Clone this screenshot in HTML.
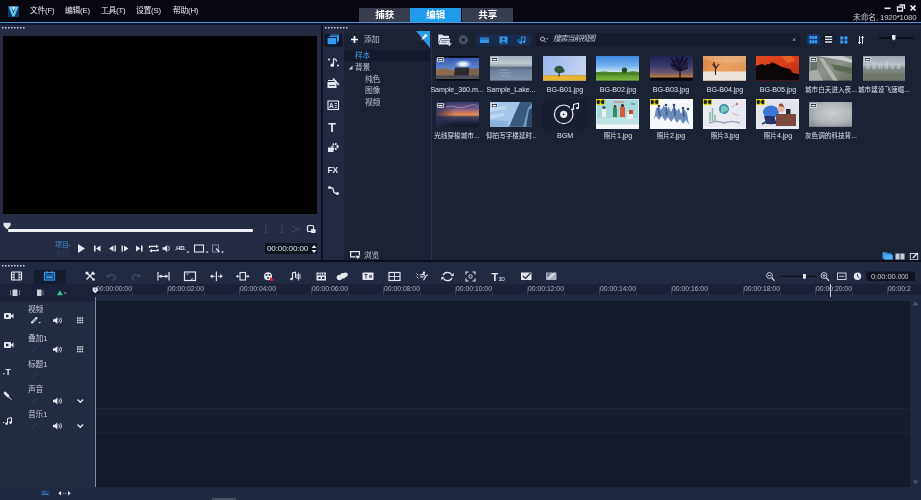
<!DOCTYPE html>
<html lang="zh"><head><meta charset="utf-8"><title>VideoStudio</title><style>
*{box-sizing:border-box;margin:0;padding:0}
html,body{width:921px;height:500px;overflow:hidden;background:#252b42}
body{position:relative;font-family:"Liberation Sans","Noto Sans CJK SC",sans-serif;color:#d5d9e3;font-size:8px;line-height:1}
.a{position:absolute}
.t,.tab,svg{will-change:transform}
.t{position:absolute;white-space:nowrap}
svg{position:absolute;overflow:visible}
#title{left:0;top:0;width:921px;height:22px;background:linear-gradient(#08070f 0,#08070f 18px,#040818 22px)}
#bline{left:0;top:21.8px;width:921px;height:1.3px;background:#5596cc}
.menu{top:6.5px;font-size:7.8px;color:#e6e8ee;letter-spacing:-0.25px}
.tab{top:8px;height:13.8px;background:#373d4f;color:#fff;font-size:9.5px;font-weight:bold;text-align:center;line-height:14px}
.tab.on{background:#1f9bea}
#prev{left:2.8px;top:36px;width:314.5px;height:177.5px;background:#000}
.lbl{font-size:7.15px;color:#dde0e9;text-align:center;width:60px;letter-spacing:-0.05px;overflow:hidden;height:10px;line-height:10px}
.lbl i{font-style:normal;font-size:6.6px;letter-spacing:0}
.th{position:absolute;overflow:hidden}
.tree{font-size:7.8px;color:#bcc1cf;letter-spacing:-0.2px}
.rl{font-size:6.8px;color:#aab1c3;top:286.3px;letter-spacing:0}
.tk{width:1px;background:#39435c;top:290px;height:7px}
.trk{font-size:7.8px;color:#c2c7d4;letter-spacing:-0.2px}
</style></head><body>
<div class="a" id="title"></div><div class="a" id="bline"></div>
<svg style="left:8px;top:5.5px" width="11" height="11" viewBox="0 0 11 11"><rect x="0" y="0" width="11" height="11" fill="#0d3a66"/><path d="M0.5 0.5 L3.2 0.5 L5.5 7 L7.8 0.5 L10.5 0.5 L6.6 10.5 L4.4 10.5 Z" fill="#5fc4ee"/><path d="M3.2 0.5h4.6L5.5 5z" fill="#bfe6fa"/></svg>
<div class="t menu" style="left:29.5px">文件(F)</div>
<div class="t menu" style="left:65px">编辑(E)</div>
<div class="t menu" style="left:100.5px">工具(T)</div>
<div class="t menu" style="left:136px">设置(S)</div>
<div class="t menu" style="left:172.5px">帮助(H)</div>
<div class="a tab" style="left:359px;width:51.3px">捕获</div>
<div class="a tab on" style="left:410.3px;width:51.4px">编辑</div>
<div class="a tab" style="left:461.7px;width:51.4px">共享</div>
<svg style="left:883px;top:3px" width="36" height="10" viewBox="0 0 36 10"><rect x="1.5" y="4.5" width="6" height="1.6" fill="#e8eaf0"/><path d="M14.5 4h5v4h-5z M16.5 2h5v4" fill="none" stroke="#e8eaf0" stroke-width="1.3"/><path d="M27.5 2.5l5 5m0-5l-5 5" stroke="#fff" stroke-width="1.6"/></svg>
<div class="t" style="right:4.5px;top:13.9px;font-size:7.8px;color:#c9ccd6;letter-spacing:-0.15px">未命名, 1920*1080</div>
<div class="a" style="left:0;top:23px;width:319px;height:237px;background:#252b42"></div>
<div class="a" id="prev"></div>
<svg style="left:2px;top:26.7px" width="24" height="2"><rect x="0" y="0" width="1.5" height="1.5" fill="#cfd3e0"/><rect x="3" y="0" width="1.5" height="1.5" fill="#cfd3e0"/><rect x="6" y="0" width="1.5" height="1.5" fill="#cfd3e0"/><rect x="9" y="0" width="1.5" height="1.5" fill="#cfd3e0"/><rect x="12" y="0" width="1.5" height="1.5" fill="#cfd3e0"/><rect x="15" y="0" width="1.5" height="1.5" fill="#cfd3e0"/><rect x="18" y="0" width="1.5" height="1.5" fill="#cfd3e0"/><rect x="21" y="0" width="1.5" height="1.5" fill="#cfd3e0"/></svg>
<div class="a" style="left:8px;top:229px;width:245px;height:3px;background:#eef0f6;border-radius:1px"></div>
<svg style="left:3px;top:221.5px" width="8" height="8" viewBox="0 0 8 8"><path d="M0.5 0.8h7v3L4 7.5 0.5 3.8z" fill="#dfe2ea"/></svg>
<div class="t" style="left:54.5px;top:241.2px;font-size:7px;color:#3f93d8;letter-spacing:-0.3px">项目-</div>
<div class="t" style="left:54.5px;top:249.7px;font-size:7px;color:#2d3a58;letter-spacing:-0.3px">素材-</div>
<svg style="left:0;top:0" width="921" height="500"><path d="M78 244l7 4.5-7 4.5z" fill="#e4e7ee"/><path d="M94 245.5h1.6v6H94z M100.5 245.5v6l-4.5-3z" fill="#e4e7ee"/><path d="M113.5 245.5v6l-4.5-3z M114.5 245.5h1.4v6h-1.4z" fill="#e4e7ee"/><path d="M121.5 245.5h1.4v6h-1.4z M124 245.5l4.5 3-4.5 3z" fill="#e4e7ee"/><path d="M136 245.5l4.5 3-4.5 3z M141 245.5h1.6v6H141z" fill="#e4e7ee"/><path d="M149.5 248v-1.6h7.5 M158 249v1.7h-7.5" fill="none" stroke="#e4e7ee" stroke-width="1.3"/><path d="M156 244.6l2.6 1.8-2.6 1.8z M152 248.9l-2.6 1.8 2.6 1.8z" fill="#e4e7ee"/><path d="M162.5 247.3h2l2.7-2.3v7l-2.7-2.3h-2z" fill="#e4e7ee"/><path d="M168.6 246.3q1.5 2.2 0 4.4" fill="none" stroke="#e4e7ee" stroke-width="0.9"/><text x="175" y="250" font-size="6" font-weight="bold" fill="#e4e7ee" font-family="Liberation Sans,sans-serif" letter-spacing="-0.4">.HD.</text><path d="M186.5 251.5h3l-1.5 1.8z" fill="#e4e7ee"/><rect x="194.5" y="245" width="9" height="7" fill="none" stroke="#e4e7ee" stroke-width="1.1"/><path d="M205.5 251.5h3l-1.5 1.8z" fill="#e4e7ee"/><rect x="212.5" y="245" width="6" height="7" fill="none" stroke="#7d869c" stroke-width="1"/><path d="M216 248.5l3.5 3.5" stroke="#e4e7ee" stroke-width="1.2"/><path d="M221 251.5h3l-1.5 1.8z" fill="#e4e7ee"/><path d="M267.5 225.5h-1.8v7h1.8 M280.5 225.5h1.8v7h-1.8" fill="none" stroke="#3a4560" stroke-width="1.1"/><path d="M292 226l8 4.5m-8 1.5l8-4" stroke="#3a4560" stroke-width="1.2" fill="none"/><rect x="307.5" y="225.5" width="6" height="6" rx="1" fill="none" stroke="#e4e7ee" stroke-width="1.2"/><rect x="311" y="229" width="4.6" height="4" rx="0.8" fill="#e4e7ee"/></svg>
<div class="a" style="left:265px;top:243px;width:52px;height:11px;background:#10141f"></div>
<div class="t" style="left:267px;top:244.7px;font-size:8.1px;color:#dfe2ea;letter-spacing:-0.15px">00:00:00:00</div>
<svg style="left:311px;top:244px" width="6" height="10" viewBox="0 0 6 10"><path d="M0.5 4l2.5-3 2.5 3z M0.5 6l2.5 3 2.5-3z" fill="#e4e7ee"/></svg>
<div class="a" style="left:321px;top:23px;width:2.2px;height:237px;background:#0d1122"></div>
<div class="a" style="left:323.2px;top:23px;width:20.8px;height:237px;background:#222a42"></div>
<div class="a" style="left:344px;top:23px;width:87px;height:237px;background:#1b2233"></div>
<div class="a" style="left:431px;top:23px;width:490px;height:237px;background:#1b2233"></div>
<div class="a" style="left:430.5px;top:28px;width:1px;height:232px;background:#293048"></div>
<div class="a" style="left:344px;top:23px;width:577px;height:11px;background:linear-gradient(#262c40,#1b2233)"></div>
<div class="a" style="left:0;top:23px;width:921px;height:1.7px;background:linear-gradient(#04112c,#0c1830)"></div>
<svg style="left:325px;top:26.7px" width="24" height="2"><rect x="0" y="0" width="1.5" height="1.5" fill="#cfd3e0"/><rect x="3" y="0" width="1.5" height="1.5" fill="#cfd3e0"/><rect x="6" y="0" width="1.5" height="1.5" fill="#cfd3e0"/><rect x="9" y="0" width="1.5" height="1.5" fill="#cfd3e0"/><rect x="12" y="0" width="1.5" height="1.5" fill="#cfd3e0"/><rect x="15" y="0" width="1.5" height="1.5" fill="#cfd3e0"/><rect x="18" y="0" width="1.5" height="1.5" fill="#cfd3e0"/><rect x="21" y="0" width="1.5" height="1.5" fill="#cfd3e0"/></svg>
<div class="a" style="left:344px;top:50px;width:86px;height:11px;background:#141a2b"></div>
<svg style="left:350px;top:34.5px" width="9" height="9" viewBox="0 0 9 9"><path d="M4.5 1v7M1 4.5h7" stroke="#fff" stroke-width="1.7"/></svg>
<div class="t tree" style="left:364px;top:35.8px;">添加</div>
<div class="t tree" style="left:355px;top:51.5px;color:#3f9be0">样本</div>
<svg style="left:348px;top:65px" width="5" height="5" viewBox="0 0 5 5"><path d="M4.5 0.5v4h-4z" fill="#c9cdd8"/></svg>
<div class="t tree" style="left:355px;top:63.5px">背景</div>
<div class="t tree" style="left:364.5px;top:75.8px">纯色</div>
<div class="t tree" style="left:364.5px;top:87.4px">图像</div>
<div class="t tree" style="left:364.5px;top:98.5px">视频</div>
<svg style="left:416px;top:31px" width="14" height="17" viewBox="0 0 14 17"><path d="M0 0h14v17z" fill="#2b9ae6"/><path d="M9.5 3l2 2-2.5 1.2-1.6 2-1.4-1.4 2-1.6z M6.6 7.6l-1.6 1.8" fill="#fff" stroke="#fff" stroke-width="0.6"/></svg>
<svg style="left:350px;top:251.3px" width="11" height="9" viewBox="0 0 11 9"><path d="M0.6 0.6h8.8v5.2h-8.8z" fill="none" stroke="#e4e7ee" stroke-width="1.2"/><path d="M4.8 4.6h6l-3 3.8z" fill="#e4e7ee" stroke="#1b2233" stroke-width="0.6"/></svg>
<div class="t tree" style="left:364px;top:252.3px;font-size:7.6px">浏览</div>
<svg style="left:0;top:0" width="921" height="500"><rect x="324.4" y="33.8" width="18" height="12.8" fill="#10172c"/><path d="M327.6 38h8.6v6.2h-8.6z" fill="#2f9cf0"/><path d="M329 36.5h8.5v6 M330.5 35h8v6" fill="none" stroke="#2f9cf0" stroke-width="1.1"/><path d="M333.5 58.5v6.5" stroke="#e4e7ee" stroke-width="1.2"/><circle cx="332.2" cy="65.2" r="1.8" fill="#e4e7ee"/><path d="M333.5 58.5q3 .5 3 3" stroke="#e4e7ee" fill="none" stroke-width="1.2"/><circle cx="329" cy="59.5" r="1" fill="#e4e7ee"/><circle cx="338" cy="65.5" r="1" fill="#e4e7ee"/><rect x="327.5" y="82" width="9" height="6" fill="#e4e7ee"/><path d="M328 80.5h8" stroke="#e4e7ee" stroke-width="1"/><path d="M333 78.5l6 6.5" stroke="#e4e7ee" stroke-width="1.6"/><path d="M329 85.5h6" stroke="#1f2942" stroke-width="0.8"/><rect x="328" y="101" width="10.5" height="8.5" fill="none" stroke="#e4e7ee" stroke-width="1.1"/><text x="329" y="108.3" font-size="6.5" font-weight="bold" fill="#e4e7ee" font-family="Liberation Sans,sans-serif">A</text><path d="M334.5 103.5h2.5m-2.5 2h2.5m-2.5 2h2.5" stroke="#e4e7ee" stroke-width="0.8"/><text x="328.2" y="131.5" font-size="12.5" font-weight="bold" fill="#e4e7ee" font-family="Liberation Sans,sans-serif">T</text><circle cx="335" cy="146.5" r="2.6" fill="none" stroke="#e4e7ee" stroke-width="2" stroke-dasharray="1.5 0.9"/><rect x="328" y="147.5" width="5.5" height="4.5" fill="#e4e7ee"/><text x="327.5" y="173" font-size="8.5" font-weight="bold" fill="#e4e7ee" font-family="Liberation Sans,sans-serif" letter-spacing="-0.3">FX</text><path d="M329.5 187.5q4 0 4 3t4 3" fill="none" stroke="#e4e7ee" stroke-width="1.3"/><circle cx="329.5" cy="187.5" r="1.5" fill="#e4e7ee"/><circle cx="337.5" cy="193.5" r="1.5" fill="#e4e7ee"/></svg>
<svg style="left:0;top:0" width="921" height="500"><path d="M438.3 34.5h4l1 1.3h5.7v2.2h-8.2l-2.5 6z" fill="#e4e7ee"/><path d="M441 38.8h9.5l-2.5 5.7h-9.5z" fill="#e4e7ee"/><path d="M441.5 40.5h7.5m-8 1.7h6" stroke="#1b2233" stroke-width="0.5"/><path d="M449.3 41.5v4.5m-2.2-2.2h4.4" stroke="#e4e7ee" stroke-width="1.3"/><circle cx="463.3" cy="39.8" r="3.1" fill="none" stroke="#4a5266" stroke-width="2.4"/><circle cx="463.3" cy="39.8" r="4.3" fill="none" stroke="#4a5266" stroke-width="1.2" stroke-dasharray="1.7 1.68"/><rect x="476" y="34.5" width="55.5" height="11.5" rx="2" fill="#1b2b4d"/><rect x="480" y="37.5" width="9" height="5.5" fill="#2f96ea"/><path d="M480 39h9" stroke="#1b2b4d" stroke-width="0.6"/><rect x="499.5" y="36.5" width="8" height="7" fill="#2f96ea"/><circle cx="503.5" cy="39" r="1.2" fill="#1b2b4d"/><path d="M501 43q2.5-3 5 0z" fill="#1b2b4d"/><path d="M521.5 37v5.5 M521.5 37h3.5v4.5" stroke="#2f96ea" stroke-width="1.2" fill="none"/><circle cx="520.5" cy="42.7" r="1.4" fill="#2f96ea"/><circle cx="524" cy="41.8" r="1.4" fill="#2f96ea"/><path d="M517 40h3m-3 1.8h2" stroke="#2f96ea" stroke-width="0.8"/><rect x="536" y="33" width="264" height="13" rx="1" fill="#161b2d"/><circle cx="542.5" cy="39" r="2" fill="none" stroke="#b9bfce" stroke-width="1"/><path d="M544 40.5l2 2" stroke="#b9bfce" stroke-width="1"/><path d="M546 38.2h2.4l-1.2 1.5z" fill="#b9bfce"/><path d="M793 38.5l2.4 2.4m0-2.4l-2.4 2.4" stroke="#b9bfce" stroke-width="0.8"/><rect x="807.2" y="34.3" width="12.3" height="10" fill="#19387a"/><path d="M809.5 36h7.5v3h-7.5z M809.5 40.2h7.5v3h-7.5z" fill="#37a0f2"/><path d="M812 36v7.2m2.5-7.2v7.2" stroke="#193462" stroke-width="0.5"/><rect x="823.5" y="34.3" width="10" height="10" fill="#11172b"/><path d="M825 36.8h7.2m-7.2 2.6h7.2m-7.2 2.6h7.2" stroke="#e4e7ee" stroke-width="1.4"/><rect x="838.3" y="34.3" width="10.8" height="10" fill="#162243"/><path d="M840.2 36.5h3v3h-3z m4.2 0h3v3h-3z m-4.2 4h3v3h-3z m4.2 0h3v3h-3z" fill="#37a0f2"/><path d="M859.5 36v8m3-8v8" stroke="#e4e7ee" stroke-width="1"/><path d="M857.8 42l1.7 2.2 1.7-2.2z M860.8 38l1.7-2.2 1.7 2.2z" fill="#e4e7ee"/><path d="M879 37.8h34.5" stroke="#090c15" stroke-width="1.8"/><path d="M892 35h3.5v4l-1.75 1.5-1.75-1.5z" fill="#e4e7ee"/></svg>
<div class="t" style="left:553px;top:35.3px;font-size:7.8px;font-style:italic;color:#c5cad6;letter-spacing:-0.9px">搜索当前视图</div>
<div class="th" style="left:436px;top:56px;width:42.9px;height:24.6px;"><svg style="left:0;top:0" width="43.2" height="24.6" viewBox="0 0 43.2 24.6" preserveAspectRatio="none"><defs><linearGradient id="g1" x1="0" y1="0" x2="0" y2="1"><stop offset="0" stop-color="#3458b0"/><stop offset="0.55" stop-color="#6488cc"/><stop offset="0.6" stop-color="#8a7560"/><stop offset="1" stop-color="#6a5848"/></linearGradient><radialGradient id="g1s" cx="0.63" cy="0.3" r="0.22"><stop offset="0" stop-color="#fff"/><stop offset="0.4" stop-color="#dfeaff" stop-opacity="0.9"/><stop offset="1" stop-color="#7aa0e0" stop-opacity="0"/></radialGradient></defs><rect width="43.2" height="24.6" fill="#05060a"/><rect y="1.8" width="43.2" height="21" fill="url(#g1)"/><rect y="1.8" width="43.2" height="21" fill="url(#g1s)"/><path d="M0 14q6-3 12-1l6 3v6.8H0z" fill="#8c6a4e"/><path d="M19 11.5h14l2 4v5H18z" fill="#2c2a2c"/><path d="M33 13l10-1v10.8H33z" fill="#7a6450"/><rect y="19.5" width="43.2" height="3.3" fill="#4a4e58"/></svg></div>
<svg style="left:437px;top:57px" width="7" height="5" viewBox="0 0 7 5"><rect x="0.4" y="0.4" width="6.2" height="4.2" rx="0.6" fill="#222a3c" stroke="#fff" stroke-width="0.8"/><rect x="1.6" y="1.9" width="3.8" height="1.4" fill="#fff"/></svg>
<div class="th" style="left:489.6px;top:56px;width:42.9px;height:24.6px;"><svg style="left:0;top:0" width="43.2" height="24.6" viewBox="0 0 43.2 24.6" preserveAspectRatio="none"><defs><linearGradient id="g2" x1="0" y1="0" x2="0" y2="1"><stop offset="0" stop-color="#a2b0be"/><stop offset="0.3" stop-color="#c2cad0"/><stop offset="0.42" stop-color="#94a0ac"/><stop offset="0.46" stop-color="#586a80"/><stop offset="0.6" stop-color="#6e829c"/><stop offset="1" stop-color="#8294ac"/></linearGradient></defs><rect width="43.2" height="24.6" fill="url(#g2)"/><path d="M10 14h8M9 17h12M11 20h9" stroke="#aebccc" stroke-width="0.8" opacity="0.7"/></svg></div>
<svg style="left:490.6px;top:57px" width="7" height="5" viewBox="0 0 7 5"><rect x="0.4" y="0.4" width="6.2" height="4.2" rx="0.6" fill="#222a3c" stroke="#fff" stroke-width="0.8"/><rect x="1.6" y="1.9" width="3.8" height="1.4" fill="#fff"/></svg>
<div class="th" style="left:543px;top:56px;width:42.9px;height:24.6px;"><svg style="left:0;top:0" width="43.2" height="24.6" viewBox="0 0 43.2 24.6" preserveAspectRatio="none"><defs><linearGradient id="g3" x1="0" y1="0" x2="1" y2="0.3"><stop offset="0" stop-color="#98b4ea"/><stop offset="1" stop-color="#c6d2f2"/></linearGradient></defs><rect width="43.2" height="24.6" fill="url(#g3)"/><rect y="19.6" width="43.2" height="5" fill="#e6b830"/><rect y="19.2" width="43.2" height="0.9" fill="#c9a040"/><ellipse cx="16" cy="13.5" rx="4.6" ry="3.8" fill="#2e5a3c"/><ellipse cx="19" cy="14.8" rx="2.6" ry="2" fill="#2e5a3c"/><path d="M15.5 16h1.3v4.5h-1.3z" fill="#3a4030"/></svg></div>
<div class="th" style="left:596.4px;top:56px;width:42.9px;height:24.6px;"><svg style="left:0;top:0" width="43.2" height="24.6" viewBox="0 0 43.2 24.6" preserveAspectRatio="none"><defs><linearGradient id="g4" x1="0" y1="0" x2="0" y2="1"><stop offset="0" stop-color="#3f86de"/><stop offset="0.4" stop-color="#74b2ee"/><stop offset="0.66" stop-color="#cde6f8"/><stop offset="0.67" stop-color="#4c8a2a"/><stop offset="1" stop-color="#7cba40"/></linearGradient></defs><rect width="43.2" height="24.6" fill="url(#g4)"/><path d="M0 16.5q8-2 16 0t14 0 13.2-.5v3H0z" fill="#4a8428"/><circle cx="28.5" cy="14.3" r="2.7" fill="#234e22"/></svg></div>
<div class="th" style="left:649.8px;top:56px;width:42.9px;height:24.6px;"><svg style="left:0;top:0" width="43.2" height="24.6" viewBox="0 0 43.2 24.6" preserveAspectRatio="none"><defs><linearGradient id="g5" x1="0" y1="0" x2="0" y2="1"><stop offset="0" stop-color="#23285c"/><stop offset="0.4" stop-color="#45457f"/><stop offset="0.7" stop-color="#8c6c7c"/><stop offset="0.86" stop-color="#e09a48"/><stop offset="0.89" stop-color="#0a0808"/><stop offset="1" stop-color="#050404"/></linearGradient></defs><rect width="43.2" height="24.6" fill="url(#g5)"/><path d="M30 22v-11m0 4l-6-7m6 5l6-8m-6 6l-9-2m9 5l8-2m-8-3l-4-8m4 7l3-8m-9 6l-3-4m14 3l3-3" stroke="#100c18" stroke-width="1.2" fill="none"/><ellipse cx="29.5" cy="9" rx="9" ry="6.5" fill="#141026" opacity="0.55"/><rect x="0" y="0" width="43.2" height="24.6" fill="#0a0a20" opacity="0.18"/></svg></div>
<div class="th" style="left:703px;top:56px;width:42.9px;height:24.6px;"><svg style="left:0;top:0" width="43.2" height="24.6" viewBox="0 0 43.2 24.6" preserveAspectRatio="none"><defs><linearGradient id="g6" x1="0" y1="0" x2="1" y2="0.4"><stop offset="0" stop-color="#d88040"/><stop offset="0.5" stop-color="#eaa060"/><stop offset="1" stop-color="#e09858"/></linearGradient></defs><rect width="43.2" height="24.6" fill="url(#g6)"/><path d="M0 3q20 6 43.2 3v-6H0z" fill="#e8b080" opacity="0.6"/><rect y="15.5" width="43.2" height="9.1" fill="#ebe4dc"/><path d="M12.5 19v-9m0 2l-3-4m3 5l3.5-5m-3.5 3l-2-5" stroke="#3a2418" stroke-width="1.1" fill="none"/></svg></div>
<div class="th" style="left:756.2px;top:56px;width:42.9px;height:24.6px;"><svg style="left:0;top:0" width="43.2" height="24.6" viewBox="0 0 43.2 24.6" preserveAspectRatio="none"><defs><linearGradient id="g7" x1="0" y1="0" x2="1" y2="1"><stop offset="0" stop-color="#e04a20"/><stop offset="0.5" stop-color="#d83c1c"/><stop offset="1" stop-color="#b82814"/></linearGradient></defs><rect width="43.2" height="24.6" fill="url(#g7)"/><path d="M26 0h10l3 5-8 2z" fill="#f07030" opacity="0.7"/><path d="M0 10l6-2 5 2 5-4 6 3 4 2 8 2 3 4 6 1v6.6H0z" fill="#0c0606"/><path d="M10 9l14 3 10 5" stroke="#0c0606" stroke-width="2.2" fill="none"/></svg></div>
<div class="th" style="left:809.4px;top:56px;width:42.9px;height:24.6px;"><svg style="left:0;top:0" width="43.2" height="24.6" viewBox="0 0 43.2 24.6" preserveAspectRatio="none"><defs><linearGradient id="g8" x1="0" y1="0" x2="1" y2="1"><stop offset="0" stop-color="#767c78"/><stop offset="0.5" stop-color="#8c928a"/><stop offset="1" stop-color="#687062"/></linearGradient></defs><rect width="43.2" height="24.6" fill="url(#g8)"/><path d="M8 0h26l9.2 4v3l-12-3z" fill="#c8ccd0"/><path d="M10 2l14 22.6h5L14 2z" fill="#b4b4ac"/><path d="M22 8l21.2 4v6L26 14z" fill="#5c6a54"/><path d="M0 16l8-3 6 11.6H0z" fill="#a8aca8"/><path d="M2 6h6v8H2z" fill="#6a706c"/></svg></div>
<svg style="left:810.4px;top:57px" width="7" height="5" viewBox="0 0 7 5"><rect x="0.4" y="0.4" width="6.2" height="4.2" rx="0.6" fill="#222a3c" stroke="#fff" stroke-width="0.8"/><rect x="1.6" y="1.9" width="3.8" height="1.4" fill="#fff"/></svg>
<div class="th" style="left:862.6px;top:56px;width:42.9px;height:24.6px;"><svg style="left:0;top:0" width="43.2" height="24.6" viewBox="0 0 43.2 24.6" preserveAspectRatio="none"><defs><linearGradient id="g9" x1="0" y1="0" x2="0" y2="1"><stop offset="0" stop-color="#9aa4b0"/><stop offset="0.35" stop-color="#b8c0c8"/><stop offset="0.5" stop-color="#848c8c"/><stop offset="1" stop-color="#687060"/></linearGradient></defs><rect width="43.2" height="24.6" fill="url(#g9)"/><path d="M4 13v-4h2v4m4 0v-6h2v6m4 0v-5h2.5v5m4 0v-7h2v7m4 0v-5h2v5m4 0v-4h2v4" stroke="#c4ccd0" stroke-width="1.4" fill="none" opacity="0.8"/><rect y="17" width="43.2" height="7.6" fill="#70786a" opacity="0.8"/></svg></div>
<svg style="left:863.6px;top:57px" width="7" height="5" viewBox="0 0 7 5"><rect x="0.4" y="0.4" width="6.2" height="4.2" rx="0.6" fill="#222a3c" stroke="#fff" stroke-width="0.8"/><rect x="1.6" y="1.9" width="3.8" height="1.4" fill="#fff"/></svg>
<div class="th" style="left:436px;top:102px;width:42.9px;height:24.8px;"><svg style="left:0;top:0" width="43.2" height="24.8" viewBox="0 0 43.2 24.8" preserveAspectRatio="none"><defs><linearGradient id="h1" x1="0" y1="0" x2="0" y2="1"><stop offset="0" stop-color="#3c3a68"/><stop offset="0.25" stop-color="#6a5688"/><stop offset="0.42" stop-color="#c87868"/><stop offset="0.52" stop-color="#e89048"/><stop offset="0.6" stop-color="#4c4060"/><stop offset="0.78" stop-color="#262a44"/><stop offset="0.9" stop-color="#181b2c"/><stop offset="1" stop-color="#14172a"/></linearGradient><linearGradient id="h1b" x1="0" y1="0" x2="1" y2="0"><stop offset="0" stop-color="#2a2c50" stop-opacity="0.85"/><stop offset="0.45" stop-color="#2a2c50" stop-opacity="0"/><stop offset="1" stop-color="#2a2c50" stop-opacity="0"/></linearGradient></defs><rect width="43.2" height="24.8" fill="url(#h1)"/><rect width="43.2" height="24.8" fill="url(#h1b)"/><path d="M10 5q6-2 10 0t12-1 10 1" stroke="#b8a8c8" stroke-width="1" fill="none" opacity="0.6"/></svg></div>
<svg style="left:437px;top:103px" width="7" height="5" viewBox="0 0 7 5"><rect x="0.4" y="0.4" width="6.2" height="4.2" rx="0.6" fill="#222a3c" stroke="#fff" stroke-width="0.8"/><rect x="1.6" y="1.9" width="3.8" height="1.4" fill="#fff"/></svg>
<div class="th" style="left:489.6px;top:102px;width:42.9px;height:24.8px;"><svg style="left:0;top:0" width="43.2" height="24.8" viewBox="0 0 43.2 24.8" preserveAspectRatio="none"><rect width="43.2" height="24.8" fill="#a4c6ea"/><path d="M0 6l16-2v3L0 10z M0 13l14-2v3L0 17z" fill="#c4dcf4" opacity="0.8"/><path d="M0 18l18 1v5.8H0z" fill="#8ab4e0"/><path d="M30 0h13.2v24.8H19z" fill="#3a5a7c"/><path d="M38 6l5.2-6v24.8H33z" fill="#6a9ac4"/><path d="M39 8l4.2-3v19.8h-7z" fill="#2c4866"/></svg></div>
<svg style="left:490.6px;top:103px" width="7" height="5" viewBox="0 0 7 5"><rect x="0.4" y="0.4" width="6.2" height="4.2" rx="0.6" fill="#222a3c" stroke="#fff" stroke-width="0.8"/><rect x="1.6" y="1.9" width="3.8" height="1.4" fill="#fff"/></svg>
<div class="th" style="left:541.5px;top:99.3px;width:46px;height:30.5px;"><svg style="left:0;top:0" width="46" height="30.5" viewBox="0 0 46 30.5" preserveAspectRatio="none"><rect width="46" height="30.5" fill="#191e31"/><circle cx="21.7" cy="15.3" r="9.3" fill="none" stroke="#e8eaf0" stroke-width="1.2"/><circle cx="21.7" cy="15.3" r="3.6" fill="#e8eaf0"/><circle cx="21.7" cy="15.3" r="0.9" fill="#191e31"/><rect x="28" y="3" width="10" height="9" fill="#191e31"/><path d="M31.5 10.5v-5l5-1.3v4.8" fill="none" stroke="#e8eaf0" stroke-width="1.1"/><ellipse cx="30.4" cy="10.6" rx="1.5" ry="1.1" fill="#e8eaf0"/><ellipse cx="35.4" cy="9.2" rx="1.5" ry="1.1" fill="#e8eaf0"/></svg></div>
<div class="th" style="left:596.4px;top:99.4px;width:42.9px;height:30px;"><svg style="left:0;top:0" width="43.2" height="30" viewBox="0 0 43.2 30" preserveAspectRatio="none"><rect width="43.2" height="30" fill="#f4f6f8"/><rect x="0.8" y="0.5" width="41.6" height="24.7" fill="#a6d8dc"/><rect x="0.8" y="19" width="41.6" height="6.2" fill="#bfe3e2"/><path d="M6 10h4v8H6z" fill="#f0f0f0"/><circle cx="8" cy="8.5" r="1.6" fill="#3a4a5a"/><path d="M17 9h4v9h-4z" fill="#3c8a5a"/><circle cx="19" cy="7.5" r="1.5" fill="#5a3a2a"/><path d="M24 8h5v10h-5z" fill="#d85a3a"/><circle cx="26.5" cy="6.5" r="1.6" fill="#3a2a2a"/><path d="M31 13h6v7h-6z" fill="#e8e8f0"/><path d="M33 11h4v4h-4z" fill="#c8482a"/><path d="M18 3h10" stroke="#d86a5a" stroke-width="1"/><path d="M35 5h4" stroke="#5a9aa8" stroke-width="1.5"/></svg></div>
<svg style="left:596.4px;top:99.4px" width="9" height="6" viewBox="0 0 9 6"><rect width="9" height="6" fill="#f2e81c"/><path d="M1 1.2h2.4v3.6H1z M5.6 1.2H8v3.6H5.6z M3.4 2.2l2.2 1.6m0-1.6L3.4 3.8" fill="#1a1a1a" stroke="#1a1a1a" stroke-width="0.5"/></svg>
<div class="th" style="left:649.8px;top:99.4px;width:42.9px;height:30px;"><svg style="left:0;top:0" width="43.2" height="30" viewBox="0 0 43.2 30" preserveAspectRatio="none"><rect width="43.2" height="30" fill="#f6f8fb"/><path d="M4 20l2-10 3-3 2 4 3-5 2 5 3-3 2 5 3-6 3 5 2-3 2 6 3-5 3 4 2 12-3-5-3 4-3-5-3 4-3-5-3 4-3-5-3 4-3-5-3 4-3-4z" fill="#6c8cba"/><path d="M8 9l2 8m6-9l1 9m7-10l1 10m8-7l1 8" stroke="#3c5c94" stroke-width="1.6" fill="none"/><circle cx="9" cy="7" r="1.3" fill="#2c4474"/><circle cx="16" cy="6" r="1.3" fill="#2c4474"/><circle cx="24" cy="6" r="1.3" fill="#2c4474"/><circle cx="33" cy="9" r="1.3" fill="#2c4474"/><circle cx="38" cy="10" r="1.3" fill="#2c4474"/></svg></div>
<svg style="left:649.8px;top:99.4px" width="9" height="6" viewBox="0 0 9 6"><rect width="9" height="6" fill="#f2e81c"/><path d="M1 1.2h2.4v3.6H1z M5.6 1.2H8v3.6H5.6z M3.4 2.2l2.2 1.6m0-1.6L3.4 3.8" fill="#1a1a1a" stroke="#1a1a1a" stroke-width="0.5"/></svg>
<div class="th" style="left:703px;top:99.4px;width:42.9px;height:30px;"><svg style="left:0;top:0" width="43.2" height="30" viewBox="0 0 43.2 30" preserveAspectRatio="none"><rect width="43.2" height="30" fill="#f0f1f6"/><rect x="1" y="1.5" width="41.2" height="26" fill="#e8eaf2"/><circle cx="21" cy="10" r="5" fill="#3a8aa8"/><path d="M18 8q3-3 6 0t-2 5-4-1z" fill="#7cc4c0"/><path d="M7 22v-9m2.5 9v-13m2.5 13v-6" stroke="#8abca8" stroke-width="1.6"/><path d="M6 24q8-3 15 0q8-3 16 0" stroke="#9aa2b4" stroke-width="1.4" fill="none"/><path d="M28 8l6-3m-5 9l7 3" stroke="#c8a8a0" stroke-width="0.8"/><circle cx="34" cy="5" r="1.2" fill="#d87a6a"/></svg></div>
<svg style="left:703px;top:99.4px" width="9" height="6" viewBox="0 0 9 6"><rect width="9" height="6" fill="#f2e81c"/><path d="M1 1.2h2.4v3.6H1z M5.6 1.2H8v3.6H5.6z M3.4 2.2l2.2 1.6m0-1.6L3.4 3.8" fill="#1a1a1a" stroke="#1a1a1a" stroke-width="0.5"/></svg>
<div class="th" style="left:756.2px;top:99.4px;width:42.9px;height:30px;"><svg style="left:0;top:0" width="43.2" height="30" viewBox="0 0 43.2 30" preserveAspectRatio="none"><rect width="43.2" height="30" fill="#eceef4"/><rect x="1" y="1.5" width="41.2" height="26.5" fill="#e2e4ec"/><ellipse cx="15" cy="13" rx="8" ry="6.5" fill="#3878d4"/><path d="M8 17h10l3 8H10z" fill="#24346c"/><circle cx="25" cy="9.5" r="3.6" fill="#e8b4a0"/><path d="M23 5q4-2 5 3l-5-1z" fill="#8a4a38"/><path d="M20 15h20v12H20z" fill="#7c4a3c"/><path d="M30 10h4.5v5H30z" fill="#2a2a34"/><path d="M6 25l6-3 4 3" stroke="#24346c" stroke-width="1.8" fill="none"/></svg></div>
<svg style="left:756.2px;top:99.4px" width="9" height="6" viewBox="0 0 9 6"><rect width="9" height="6" fill="#f2e81c"/><path d="M1 1.2h2.4v3.6H1z M5.6 1.2H8v3.6H5.6z M3.4 2.2l2.2 1.6m0-1.6L3.4 3.8" fill="#1a1a1a" stroke="#1a1a1a" stroke-width="0.5"/></svg>
<div class="th" style="left:809.4px;top:102px;width:42.9px;height:24.8px;"><svg style="left:0;top:0" width="43.2" height="24.8" viewBox="0 0 43.2 24.8" preserveAspectRatio="none"><defs><radialGradient id="h8" cx="0.55" cy="0.45" r="0.7"><stop offset="0" stop-color="#cdd0d2"/><stop offset="0.6" stop-color="#b0b4b8"/><stop offset="1" stop-color="#8a9096"/></radialGradient></defs><rect width="43.2" height="24.8" fill="url(#h8)"/></svg></div>
<svg style="left:810.4px;top:103px" width="7" height="5" viewBox="0 0 7 5"><rect x="0.4" y="0.4" width="6.2" height="4.2" rx="0.6" fill="#222a3c" stroke="#fff" stroke-width="0.8"/><rect x="1.6" y="1.9" width="3.8" height="1.4" fill="#fff"/></svg>
<div class="t lbl" style="left:427.4px;top:84.6px">Sample_360.m...</div>
<div class="t lbl" style="left:481.1px;top:84.6px">Sample_Lake...</div>
<div class="t lbl" style="left:534.5px;top:84.6px">BG-B01.jpg</div>
<div class="t lbl" style="left:587.9px;top:84.6px">BG-B02.jpg</div>
<div class="t lbl" style="left:641.2px;top:84.6px">BG-B03.jpg</div>
<div class="t lbl" style="left:694.5px;top:84.6px">BG-B04.jpg</div>
<div class="t lbl" style="left:747.7px;top:84.6px">BG-B05.jpg</div>
<div class="t lbl" style="left:800.9px;top:84.6px"><i>城市白天进入夜</i>...</div>
<div class="t lbl" style="left:854.1px;top:84.6px"><i>城市建设飞速崛</i>...</div>
<div class="t lbl" style="left:427.4px;top:130.8px"><i>光线穿梭城市</i>...</div>
<div class="t lbl" style="left:481.1px;top:130.8px"><i>仰拍写字楼延时</i>..</div>
<div class="t lbl" style="left:534.5px;top:130.8px">BGM</div>
<div class="t lbl" style="left:587.9px;top:130.8px"><i>照片</i>1.jpg</div>
<div class="t lbl" style="left:641.2px;top:130.8px"><i>照片</i>2.jpg</div>
<div class="t lbl" style="left:694.5px;top:130.8px"><i>照片</i>3.jpg</div>
<div class="t lbl" style="left:747.7px;top:130.8px"><i>照片</i>4.jpg</div>
<div class="t lbl" style="left:800.9px;top:130.8px"><i>灰色调的科技背</i>...</div>
<svg style="left:0;top:0" width="921" height="500"><path d="M882.5 252.3h4l1 1h4v5.5h-9z" fill="#2f96ea"/><path d="M884.3 255h8.5v4.6h-8.5z" fill="#4fb0f6"/><rect x="895.5" y="253.5" width="9" height="6" fill="#c9cdd8"/><path d="M900 253.5v6" stroke="#1c2237" stroke-width="0.8"/><rect x="910.3" y="253.5" width="7.4" height="6.3" fill="none" stroke="#c9cdd8" stroke-width="1"/><path d="M912.8 258l4.8-5" stroke="#e4e7ee" stroke-width="1.4"/></svg>
<div class="a" style="left:0;top:260.2px;width:921px;height:2px;background:#0a0e1b"></div>
<div class="a" style="left:0;top:262px;width:921px;height:238px;background:#222a42"></div>
<svg style="left:2px;top:264.7px" width="24" height="2"><rect x="0" y="0" width="1.5" height="1.5" fill="#cfd3e0"/><rect x="3" y="0" width="1.5" height="1.5" fill="#cfd3e0"/><rect x="6" y="0" width="1.5" height="1.5" fill="#cfd3e0"/><rect x="9" y="0" width="1.5" height="1.5" fill="#cfd3e0"/><rect x="12" y="0" width="1.5" height="1.5" fill="#cfd3e0"/><rect x="15" y="0" width="1.5" height="1.5" fill="#cfd3e0"/><rect x="18" y="0" width="1.5" height="1.5" fill="#cfd3e0"/><rect x="21" y="0" width="1.5" height="1.5" fill="#cfd3e0"/></svg>
<div class="a" style="left:0;top:284px;width:921px;height:11.3px;background:#1b2136"></div>
<div class="a" style="left:0;top:295.3px;width:96px;height:6.2px;background:#1b2136"></div>
<div class="a" style="left:96px;top:295.3px;width:825px;height:5.2px;background:#232a43"></div>
<div class="a" style="left:34px;top:270px;width:31.5px;height:13.5px;background:#171d30"></div>
<svg style="left:0;top:0" width="921" height="500"><rect x="11.5" y="272" width="10" height="8" rx="0.8" fill="none" stroke="#e4e7ee" stroke-width="1.2"/><path d="M14 272v8m5-8v8" stroke="#e4e7ee" stroke-width="1"/><path d="M12 274.7h2m-2 2.6h2m5-2.6h2m-2 2.6h2" stroke="#e4e7ee" stroke-width="0.8"/><rect x="44.5" y="272.5" width="10" height="7.5" fill="none" stroke="#2f96ea" stroke-width="1.2"/><path d="M44.5 275h10 M47 271v3 M52 271v3" stroke="#2f96ea" stroke-width="1.2"/><rect x="46" y="276.2" width="7" height="2.3" fill="#2f96ea"/><path d="M86.5 272.5l7 7m0-7l-7 7" stroke="#e4e7ee" stroke-width="1.4"/><circle cx="87" cy="273" r="1.6" fill="#e4e7ee"/><circle cx="93.5" cy="279.5" r="1.3" fill="#e4e7ee"/><path d="M92 272l2.5 2.5" stroke="#e4e7ee" stroke-width="2"/><path d="M108.5 276q3.5-3 6 0t-2 4" fill="none" stroke="#3c4866" stroke-width="1.5"/><path d="M106.5 274l1 4 3.5-1.5z" fill="#3c4866"/><path d="M139 276q-3.5-3-6 0t2 4" fill="none" stroke="#3c4866" stroke-width="1.5"/><path d="M141 274l-1 4-3.5-1.5z" fill="#3c4866"/><path d="M158 272v8.5m11-8.5v8.5 M159 276.3h9" stroke="#e4e7ee" stroke-width="1.2" fill="none"/><path d="M159 276.3l2.5-2v4z M168 276.3l-2.5-2v4z" fill="#e4e7ee"/><rect x="184.5" y="272" width="11" height="8.5" fill="none" stroke="#e4e7ee" stroke-width="1.2"/><path d="M186.5 274.5l2-1m4.5 5l-2 1" stroke="#e4e7ee" stroke-width="0.9"/><path d="M216.4 271.5v9.5" stroke="#e4e7ee" stroke-width="1.2"/><path d="M211 276.3h4m3 0h4" stroke="#e4e7ee" stroke-width="1"/><path d="M210 276.3l2.6-2.2v4.4z M222.8 276.3l-2.6-2.2v4.4z" fill="#e4e7ee"/><rect x="240" y="272.5" width="5.5" height="7.5" fill="none" stroke="#e4e7ee" stroke-width="1.1"/><path d="M236.5 276.3h3m6.5 0h3" stroke="#e4e7ee" stroke-width="1"/><path d="M236 276.3l2-1.6v3.2z M249.5 276.3l-2-1.6v3.2z" fill="#e4e7ee"/><circle cx="268" cy="276.3" r="4" fill="#e4e7ee"/><circle cx="266.5" cy="275" r="1" fill="#222a42"/><circle cx="269.5" cy="275" r="1" fill="#222a42"/><circle cx="268" cy="278" r="1" fill="#222a42"/><path d="M270 277l4.5 3.5-4.5.5z" fill="#e02020"/><path d="M292.5 279v-6l3-.8v5.5" stroke="#e4e7ee" stroke-width="1.1" fill="none"/><circle cx="291.5" cy="279" r="1.3" fill="#e4e7ee"/><path d="M297 274v5m1.5-6.5v8m1.5-6.5v5" stroke="#e4e7ee" stroke-width="0.9"/><rect x="316.5" y="272.5" width="9.5" height="8" fill="#e4e7ee"/><path d="M317 275h9 M319 272.5v2.5m2.3-2.5v2.5m2.3-2.5v2.5" stroke="#222a42" stroke-width="0.8"/><path d="M318.5 277h2v2h-2z m3.5 0h2.5v2H322z" fill="#222a42"/><circle cx="339.5" cy="277.5" r="2.8" fill="#e4e7ee"/><circle cx="343" cy="275.8" r="2.8" fill="#e4e7ee"/><circle cx="345.5" cy="274.8" r="2.3" fill="#e4e7ee"/><rect x="362.5" y="272.5" width="11" height="7.5" rx="0.8" fill="#e4e7ee"/><path d="M364.5 274.5h3m-1.5 0v4" stroke="#222a42" stroke-width="0.9"/><path d="M369 275h3v3h-3z" fill="#222a42" opacity="0.6"/><rect x="389" y="272.5" width="11" height="8" fill="none" stroke="#e4e7ee" stroke-width="1.2"/><path d="M389 276.5h11 M394.5 272.5v8" stroke="#e4e7ee" stroke-width="0.9"/><circle cx="424" cy="272.8" r="1.2" fill="#e4e7ee"/><path d="M420 275l3.5-.8 2 2.5-2 3.5m0-3.5l-3 .5m5.5-1.5l2-1" stroke="#e4e7ee" stroke-width="1.2" fill="none"/><path d="M416.5 273.5l2 2m-2 1l2 2" stroke="#e4e7ee" stroke-width="0.8"/><path d="M443 275.3q1.2-3 4.5-3 2.6 0 4 2 M452 277.7q-1.2 3-4.5 3-2.6 0-4-2" fill="none" stroke="#e4e7ee" stroke-width="1.2"/><path d="M450.3 275.6l3.2.600.3-3.2z M444.7 277.4l-3.2-.600-.300 3.2z" fill="#e4e7ee"/><path d="M466 274.5v-2.5h2.5 M475 274.5v-2.5h-2.5 M466 278.5v2.5h2.5 M475 278.5v2.5h-2.5" fill="none" stroke="#e4e7ee" stroke-width="1.1"/><circle cx="470.5" cy="276.5" r="1.7" fill="none" stroke="#e4e7ee" stroke-width="0.9"/><text x="491.5" y="281" font-size="11" font-weight="bold" fill="#e4e7ee" font-family="Liberation Sans,sans-serif">T</text><text x="498.5" y="281" font-size="5" fill="#e4e7ee" font-family="Liberation Sans,sans-serif">3D</text><rect x="521" y="272.5" width="10.5" height="7.5" fill="#e4e7ee"/><path d="M523 276l2.5 2.5 5-5.5" stroke="#222a42" stroke-width="1.2" fill="none"/><rect x="546" y="272.5" width="10.5" height="7.5" fill="#aab0c0"/><path d="M548 279l7-6" stroke="#e4e7ee" stroke-width="1.4"/><path d="M547 274h3m-3 2h2" stroke="#222a42" stroke-width="0.7"/><circle cx="769.5" cy="275.5" r="2.9" fill="none" stroke="#c9cdd8" stroke-width="1"/><path d="M768 275.5h3" stroke="#c9cdd8" stroke-width="0.9"/><path d="M771.7 277.8l2.8 3" stroke="#c9cdd8" stroke-width="1.3"/><path d="M780 276.3h36.5" stroke="#0c0f18" stroke-width="1.3"/><path d="M803 274h3v4l-1.5 1.2-1.5-1.2z" fill="#dfe2ea"/><circle cx="824" cy="275.5" r="2.9" fill="none" stroke="#c9cdd8" stroke-width="1"/><path d="M822.5 275.5h3m-1.5-1.5v3" stroke="#c9cdd8" stroke-width="0.9"/><path d="M826.2 277.8l2.8 3" stroke="#c9cdd8" stroke-width="1.3"/><rect x="837.5" y="273" width="8.5" height="6.5" fill="none" stroke="#c9cdd8" stroke-width="1"/><path d="M839 276.3h5.5" stroke="#c9cdd8" stroke-width="0.9"/><circle cx="857.5" cy="276.3" r="3.7" fill="#e4e7ee"/><path d="M857.5 274v2.5l1.8 1" stroke="#222a42" stroke-width="0.9" fill="none"/><rect x="866.5" y="271.5" width="48.5" height="9.5" fill="#10141f"/><rect x="12.5" y="289.5" width="5" height="6.5" fill="#c9cdd8"/><path d="M10.5 290.5v4.5m9-4.5v4.5" stroke="#c9cdd8" stroke-width="0.9" stroke-dasharray="1 0.8"/><rect x="37" y="289.5" width="4.5" height="6.5" fill="#c9cdd8"/><path d="M43 290.5v4.5" stroke="#c9cdd8" stroke-width="0.9" stroke-dasharray="1 0.8"/><path d="M57 295.3l2.9-5 2.9 5z" fill="#30c88c"/><path d="M64 292.5h2.4l-1.2 1.4z" fill="#c9cdd8"/></svg>
<div class="t" style="left:870.5px;top:272.8px;font-size:7.6px;color:#c9cdd8;letter-spacing:-0.1px">0:00:00.<span style="font-size:6.5px">000</span></div>
<div class="a" style="left:96px;top:300.5px;width:814px;height:186.5px;background:#141b2a"></div>
<div class="a" style="left:0;top:301.5px;width:95px;height:185.5px;background:#232b41;border-top-left-radius:3px"></div>
<div class="a" style="left:96px;top:408px;width:814px;height:25px;background:#161d2c"></div>
<div class="a" style="left:96px;top:407.5px;width:814px;height:1px;background:#1d2437"></div>
<div class="a" style="left:96px;top:432.5px;width:814px;height:1.5px;background:#1f2539"></div>
<div class="a" style="left:910px;top:300.5px;width:11px;height:186.5px;background:#20283f"></div>
<svg style="left:912px;top:301px" width="7" height="5" viewBox="0 0 7 5"><path d="M0.5 4.5L3.5 0.5 6.5 4.5z" fill="#4a5572"/></svg>
<svg style="left:912px;top:480px" width="7" height="5" viewBox="0 0 7 5"><path d="M0.5 0.5L3.5 4.5 6.5 0.5z" fill="#4a5572"/></svg>
<div class="t rl" style="left:95.5px">00:00:00:00</div>
<div class="a tk" style="left:131.5px;top:292.5px;height:2.5px"></div>
<div class="t rl" style="left:167.5px">00:00:02:00</div>
<div class="a tk" style="left:203.5px;top:292.5px;height:2.5px"></div>
<div class="a tk" style="left:166.5px;top:287px;height:8px"></div>
<div class="t rl" style="left:239.5px">00:00:04:00</div>
<div class="a tk" style="left:275.5px;top:292.5px;height:2.5px"></div>
<div class="a tk" style="left:238.5px;top:287px;height:8px"></div>
<div class="t rl" style="left:311.5px">00:00:06:00</div>
<div class="a tk" style="left:347.5px;top:292.5px;height:2.5px"></div>
<div class="a tk" style="left:310.5px;top:287px;height:8px"></div>
<div class="t rl" style="left:383.5px">00:00:08:00</div>
<div class="a tk" style="left:419.5px;top:292.5px;height:2.5px"></div>
<div class="a tk" style="left:382.5px;top:287px;height:8px"></div>
<div class="t rl" style="left:455.5px">00:00:10:00</div>
<div class="a tk" style="left:491.5px;top:292.5px;height:2.5px"></div>
<div class="a tk" style="left:454.5px;top:287px;height:8px"></div>
<div class="t rl" style="left:527.5px">00:00:12:00</div>
<div class="a tk" style="left:563.5px;top:292.5px;height:2.5px"></div>
<div class="a tk" style="left:526.5px;top:287px;height:8px"></div>
<div class="t rl" style="left:599.5px">00:00:14:00</div>
<div class="a tk" style="left:635.5px;top:292.5px;height:2.5px"></div>
<div class="a tk" style="left:598.5px;top:287px;height:8px"></div>
<div class="t rl" style="left:671.5px">00:00:16:00</div>
<div class="a tk" style="left:707.5px;top:292.5px;height:2.5px"></div>
<div class="a tk" style="left:670.5px;top:287px;height:8px"></div>
<div class="t rl" style="left:743.5px">00:00:18:00</div>
<div class="a tk" style="left:779.5px;top:292.5px;height:2.5px"></div>
<div class="a tk" style="left:742.5px;top:287px;height:8px"></div>
<div class="t rl" style="left:815.5px">00:00:20:00</div>
<div class="a tk" style="left:851.5px;top:292.5px;height:2.5px"></div>
<div class="a tk" style="left:814.5px;top:287px;height:8px"></div>
<div class="t rl" style="left:887.5px;width:23px;overflow:hidden">00:00:22:00</div>
<div class="a tk" style="left:886.5px;top:287px;height:8px"></div>
<div class="a" style="left:829.5px;top:284px;width:1px;height:13px;background:#c4c8d4"></div>
<div class="a" style="left:95px;top:297px;width:1.3px;height:189.5px;background:#7d88ad"></div>
<svg style="left:92.2px;top:286.5px" width="6.4" height="6.6" viewBox="0 0 8 9"><path d="M0.6 0.6h6.8v4.5L4 8.5 0.6 5.1z" fill="#e8eaf0"/><path d="M2.5 2.5h3l-1.5 3z" fill="#70788c"/></svg>
<div class="a" style="left:0;top:487px;width:921px;height:13px;background:#1f2a40"></div>
<div class="a" style="left:212px;top:497.5px;width:24px;height:2.5px;background:#4a5162"></div>
<svg style="left:0;top:0" width="921" height="500"><rect x="4" y="313" width="7" height="6" rx="0.8" fill="#e4e7ee"/><path d="M11 315.5l2.5-2v5l-2.5-2z" fill="#e4e7ee"/><rect x="6" y="314.8" width="2.4" height="2.4" fill="#232b41"/><path d="M32 322.5l4.5-4.5" stroke="#e4e7ee" stroke-width="2.2" stroke-linecap="round"/><path d="M32.8 321.7l2.9-2.9" stroke="#232b41" stroke-width="0.7"/><path d="M38.5 322h2.4l-1.2 1.4z" fill="#e4e7ee"/><path d="M53 319.3h1.8l2.6-2.2v6.8l-2.6-2.2H53z" fill="#e4e7ee"/><path d="M58.8 318.8q1.3 1.7 0 3.4 M60.5 317.7q2 2.8 0 5.6" fill="none" stroke="#e4e7ee" stroke-width="0.9"/><rect x="77" y="317.2" width="1.5" height="1.5" fill="#e4e7ee"/><rect x="77" y="319.5" width="1.5" height="1.5" fill="#e4e7ee"/><rect x="77" y="321.8" width="1.5" height="1.5" fill="#e4e7ee"/><rect x="79.3" y="317.2" width="1.5" height="1.5" fill="#e4e7ee"/><rect x="79.3" y="319.5" width="1.5" height="1.5" fill="#e4e7ee"/><rect x="79.3" y="321.8" width="1.5" height="1.5" fill="#e4e7ee"/><rect x="81.6" y="317.2" width="1.5" height="1.5" fill="#e4e7ee"/><rect x="81.6" y="319.5" width="1.5" height="1.5" fill="#e4e7ee"/><rect x="81.6" y="321.8" width="1.5" height="1.5" fill="#e4e7ee"/><rect x="4" y="342" width="7" height="6" rx="0.8" fill="#e4e7ee"/><path d="M11 344.5l2.5-2v5l-2.5-2z" fill="#e4e7ee"/><rect x="6" y="343.8" width="2.4" height="2.4" fill="#232b41"/><path d="M32 351.5l4.5-4.5" stroke="#2c3652" stroke-width="2.2" stroke-linecap="round"/><path d="M32.8 350.7l2.9-2.9" stroke="#232b41" stroke-width="0.7"/><path d="M53 348.3h1.8l2.6-2.2v6.8l-2.6-2.2H53z" fill="#e4e7ee"/><path d="M58.8 347.8q1.3 1.7 0 3.4 M60.5 346.7q2 2.8 0 5.6" fill="none" stroke="#e4e7ee" stroke-width="0.9"/><rect x="77" y="346.2" width="1.5" height="1.5" fill="#e4e7ee"/><rect x="77" y="348.5" width="1.5" height="1.5" fill="#e4e7ee"/><rect x="77" y="350.8" width="1.5" height="1.5" fill="#e4e7ee"/><rect x="79.3" y="346.2" width="1.5" height="1.5" fill="#e4e7ee"/><rect x="79.3" y="348.5" width="1.5" height="1.5" fill="#e4e7ee"/><rect x="79.3" y="350.8" width="1.5" height="1.5" fill="#e4e7ee"/><rect x="81.6" y="346.2" width="1.5" height="1.5" fill="#e4e7ee"/><rect x="81.6" y="348.5" width="1.5" height="1.5" fill="#e4e7ee"/><rect x="81.6" y="350.8" width="1.5" height="1.5" fill="#e4e7ee"/><text x="5.5" y="375" font-size="8.5" font-weight="bold" fill="#e4e7ee" font-family="Liberation Sans,sans-serif">T</text><circle cx="3.8" cy="373.8" r="0.8" fill="#e4e7ee"/><path d="M32 377.5l4.5-4.5" stroke="#2c3652" stroke-width="2.2" stroke-linecap="round"/><path d="M32.8 376.7l2.9-2.9" stroke="#232b41" stroke-width="0.7"/><path d="M5 393l3 3" stroke="#e4e7ee" stroke-width="2.6" stroke-linecap="round"/><path d="M8 396.5l3.5 3" stroke="#e4e7ee" stroke-width="1"/><path d="M32 403l4.5-4.5" stroke="#2c3652" stroke-width="2.2" stroke-linecap="round"/><path d="M32.8 402.2l2.9-2.9" stroke="#232b41" stroke-width="0.7"/><path d="M53 399.8h1.8l2.6-2.2v6.8l-2.6-2.2H53z" fill="#e4e7ee"/><path d="M58.8 399.3q1.3 1.7 0 3.4 M60.5 398.2q2 2.8 0 5.6" fill="none" stroke="#e4e7ee" stroke-width="0.9"/><path d="M77.5 399.5l2.8 2.8 2.8-2.8" fill="none" stroke="#e4e7ee" stroke-width="1.3"/><path d="M7.5 423.5v-5l4-1v5" stroke="#e4e7ee" stroke-width="1" fill="none"/><circle cx="6.6" cy="423.6" r="1.3" fill="#e4e7ee"/><circle cx="10.6" cy="422.6" r="1.3" fill="#e4e7ee"/><circle cx="3.5" cy="422.5" r="0.7" fill="#e4e7ee"/><path d="M32 428l4.5-4.5" stroke="#2c3652" stroke-width="2.2" stroke-linecap="round"/><path d="M32.8 427.2l2.9-2.9" stroke="#232b41" stroke-width="0.7"/><path d="M53 424.8h1.8l2.6-2.2v6.8l-2.6-2.2H53z" fill="#e4e7ee"/><path d="M58.8 424.3q1.3 1.7 0 3.4 M60.5 423.2q2 2.8 0 5.6" fill="none" stroke="#e4e7ee" stroke-width="0.9"/><path d="M77.5 424.5l2.8 2.8 2.8-2.8" fill="none" stroke="#e4e7ee" stroke-width="1.3"/><rect x="41" y="490.3" width="8.5" height="5" fill="#1f3a64"/><path d="M42 494.3h6.5" stroke="#3f8fd8" stroke-width="1"/><path d="M42.5 492h3" stroke="#3f8fd8" stroke-width="0.7"/><path d="M58.3 493.3l2.8-2.2v4.4z M70.8 493.3l-2.8-2.2v4.4z" fill="#e4e7ee"/><path d="M62.5 493.3h4" stroke="#8a92a8" stroke-width="0.8"/></svg>
<div class="t trk" style="left:28px;top:305.8px">视频</div>
<div class="t trk" style="left:28px;top:335.3px">叠加1</div>
<div class="t trk" style="left:28px;top:361.3px">标题1</div>
<div class="t trk" style="left:28px;top:386px">声音</div>
<div class="t trk" style="left:28px;top:410.8px">音乐1</div>
</body></html>
